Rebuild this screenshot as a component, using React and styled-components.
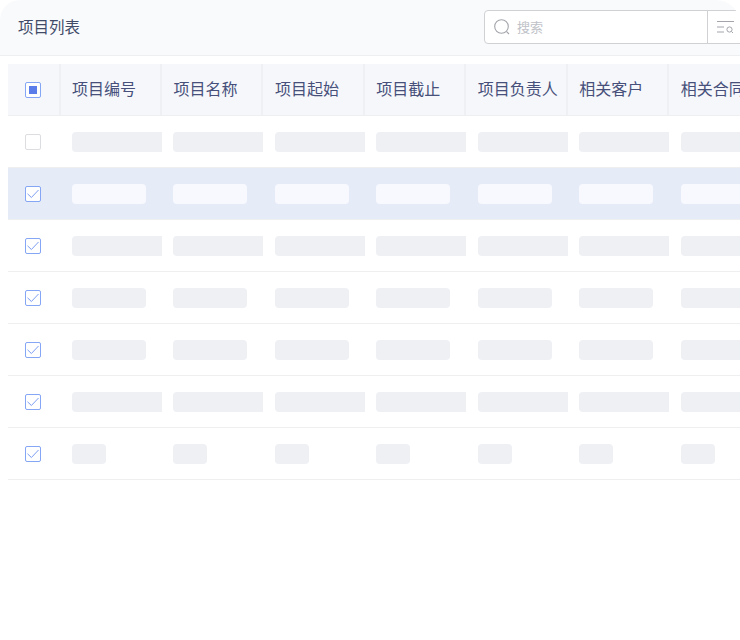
import React from 'react';
import styled, { createGlobalStyle } from 'styled-components';

const GlobalStyle = createGlobalStyle`
    html, body {
        margin: 0;
        padding: 0;
        background: #ffffff;
        overflow: hidden;
    }
    body {
        font-family: "Noto Sans CJK SC", "Noto Sans", sans-serif;
    }
`;

const Page = styled.div`
    width: 740px;
    height: 640px;
    overflow: hidden;
    background: #ffffff;
`;
const TopBar = styled.div`
    height: 55px;
    box-sizing: content-box;
    display: flex;
    align-items: center;
    justify-content: space-between;
    padding-left: 18px;
    background: #f9fafc;
    border-bottom: 1px solid #eeeff1;
    border-radius: 20px 24px 0 0;
    overflow: hidden;
`;
const Title = styled.div`
    font-size: 15.5px;
    line-height: 24px;
    color: #414b68;
    padding-bottom: 3px;
`;
const SearchBox = styled.div`
    flex: none;
    width: 270px;
    height: 32px;
    margin-right: -16px;
    margin-bottom: 1px;
    display: flex;
    align-items: center;
    background: #ffffff;
    border: 1px solid #d0d1d5;
    border-radius: 4px;
`;
const SearchInput = styled.div`
    width: 223px;
    height: 100%;
    display: flex;
    align-items: center;
    gap: 5px;
    padding-left: 7px;
    box-sizing: border-box;
    border-right: 1px solid #d0d1d5;
`;
const Placeholder = styled.span`
    font-size: 13px;
    line-height: 18px;
    color: #c0c2c8;
    padding-bottom: 1px;
`;
const FilterButton = styled.div`
    flex: 1;
    display: flex;
    align-items: center;
    padding-left: 9px;
`;
const Table = styled.div`
    margin: 8px 0 0 8px;
    width: 800px;
`;
const Row = styled.div`
    display: grid;
    grid-template-columns: 52.5px repeat(7, 101.45px);
    height: 52px;
    box-sizing: border-box;
    border-bottom: 1px solid #eeeff1;
    background: ${p => (p.$head ? '#f6f7fa' : p.$active ? '#e6ebf8' : '#ffffff')};
`;
const CheckCell = styled.div`
    display: flex;
    align-items: center;
    padding-left: 17px;
    border-right: ${p => (p.$head ? '2px solid #eff0f3' : 'none')};
`;
const HeadCell = styled.div`
    display: flex;
    align-items: center;
    padding-left: 11.5px;
    padding-bottom: 4px;
    box-sizing: border-box;
    font-size: 16px;
    color: #46507a;
    border-right: 2px solid #eff0f3;
    white-space: nowrap;
`;
const Cell = styled.div`
    display: flex;
    align-items: center;
    padding-left: 11.5px;
`;
const Skeleton = styled.div`
    height: 20px;
    width: ${p => p.$w}px;
    border-radius: ${p => (p.$w > 80 ? '4px 0 0 4px' : '4px')};
    background: ${p => (p.$active ? '#f8f9fe' : '#eff0f4')};
`;
const Box = styled.div`
    width: 16px;
    height: 16px;
    box-sizing: border-box;
    border-radius: 2px;
    display: flex;
    align-items: center;
    justify-content: center;
    background: #ffffff;
    border: 1px solid ${p => (p.$off ? '#dcdde0' : '#85a6f5')};
`;
const BoxDot = styled.div`
    width: 8px;
    height: 8px;
    background: #5b7de9;
`;

const columns = ['项目编号', '项目名称', '项目起始', '项目截止', '项目负责人', '相关客户', '相关合同'];
const rows = [
    { w: 90, off: true },
    { w: 74, active: true },
    { w: 90 },
    { w: 74 },
    { w: 74 },
    { w: 90 },
    { w: 34 },
];

const SearchIcon = () => (
    <svg width="20" height="20" viewBox="0 0 20 20" fill="none" stroke="#a3a5ab" strokeWidth="1.1">
        <circle cx="9.5" cy="9.5" r="6.8" />
        <path d="M14.6 14.6 L17 17" />
    </svg>
);
const FilterIcon = () => (
    <svg width="18" height="16" viewBox="0 0 18 16" fill="none" stroke="#a3a5ab" strokeWidth="1">
        <path d="M0 2.5 H17" />
        <path d="M0 8 H7" />
        <path d="M0 13 H7" />
        <circle cx="12.5" cy="10.5" r="2.6" />
        <path d="M14.5 12.5 L16 14" />
    </svg>
);
const Check = () => (
    <svg width="12" height="10" viewBox="0 0 12 10" fill="none" stroke="#7c9df0" strokeWidth="1">
        <path d="M0.5 4.8 L4.4 8.5 L11.5 1" />
    </svg>
);

export default function App() {
    return (
        <Page>
            <GlobalStyle />
            <TopBar>
                <Title>项目列表</Title>
                <SearchBox>
                    <SearchInput>
                        <SearchIcon />
                        <Placeholder>搜索</Placeholder>
                    </SearchInput>
                    <FilterButton>
                        <FilterIcon />
                    </FilterButton>
                </SearchBox>
            </TopBar>
            <Table>
                <Row $head>
                    <CheckCell $head>
                        <Box><BoxDot /></Box>
                    </CheckCell>
                    {columns.map(name => <HeadCell key={name}>{name}</HeadCell>)}
                </Row>
                {rows.map((row, i) => (
                    <Row key={i} $active={row.active}>
                        <CheckCell>
                            <Box $off={row.off}>{!row.off && <Check />}</Box>
                        </CheckCell>
                        {columns.map(name => (
                            <Cell key={name}>
                                <Skeleton $w={row.w} $active={row.active} />
                            </Cell>
                        ))}
                    </Row>
                ))}
            </Table>
        </Page>
    );
}
